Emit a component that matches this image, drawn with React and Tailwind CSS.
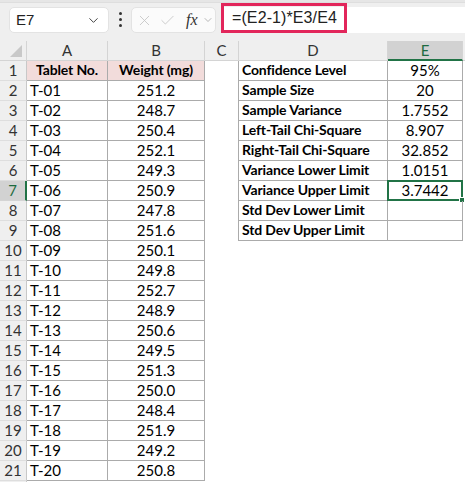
import React from "react";
import { ChevronDown, X, Check } from "lucide-react";

const weights = [
  "251.2", "248.7", "250.4", "252.1", "249.3", "250.9", "247.8", "251.6", "250.1", "249.8",
  "252.7", "248.9", "250.6", "249.5", "251.3", "250.0", "248.4", "251.9", "249.2", "250.8",
];

const stats = [
  ["Confidence Level", "95%"],
  ["Sample Size", "20"],
  ["Sample Variance", "1.7552"],
  ["Left-Tail Chi-Square", "8.907"],
  ["Right-Tail Chi-Square", "32.852"],
  ["Variance Lower Limit", "1.0151"],
  ["Variance Upper Limit", "3.7442"],
  ["Std Dev Lower Limit", ""],
  ["Std Dev Upper Limit", ""],
];

const cell = "h-[20px] flex items-end pb-[1px] leading-[18px] text-black";
const gridLine = "border-[#ababab]";
const bold = "font-bold text-[14px] tracking-[-0.15px]";

const Toolbar = () => (
  <div className="h-[41px] bg-[#efefef] flex flex-col">
    <div className="h-[3px] bg-[#e6e6e6] border-b border-[#dedede]" />
    <div className="flex items-start">
      <div className="ml-[9px] mt-[4px] w-[100px] h-[26px] bg-white rounded-[5px] border border-[#e3e3e3] flex items-center justify-between pl-[6px] pr-[7px]">
        <span className="text-[15px] text-[#222] font-['Liberation_Sans']">E7</span>
        <ChevronDown size={15} strokeWidth={1.6} className="text-[#444]" />
      </div>
      <div className="w-[22px] mt-[9px] flex flex-col items-center gap-[3px]">
        <span className="w-[3px] h-[3px] rounded-full bg-[#333]" />
        <span className="w-[3px] h-[3px] rounded-full bg-[#333]" />
        <span className="w-[3px] h-[3px] rounded-full bg-[#333]" />
      </div>
      <div className="mt-[4px] w-[85px] h-[26px] bg-[#fbfbfb] rounded-[5px] border border-[#e3e3e3] flex items-center pl-[4px]">
        <X size={17} strokeWidth={1.2} className="text-[#c4c4c4]" />
        <Check size={17} strokeWidth={1.2} className="text-[#c4c4c4] ml-[6px]" />
        <span className="ml-[10px] text-[16px] italic font-['Liberation_Serif'] text-[#333]">fx</span>
        <ChevronDown size={12} strokeWidth={1.4} className="text-[#999] ml-[4px]" />
      </div>
      <div className="ml-[5px] mt-[4px] flex-1 h-[26px] bg-white flex">
        <div className="-mt-[4px] w-[126px] h-[30px] border-[3px] border-[#e2265b] flex items-center pl-[8px]">
          <span className="text-[16px] text-[#222] font-['Liberation_Sans'] tracking-[0.1px]">=(E2-1)*E3/E4</span>
        </div>
      </div>
    </div>
  </div>
);

const HeaderRow = () => (
  <div className="h-[20px] flex bg-[#efefef] border-b border-[#d4d4d4] text-[15px] text-[#333]">
    <div className="w-[27px] border-r border-[#d4d4d4] relative">
      <svg className="absolute right-[4px] bottom-[3px]" width="12" height="12" viewBox="0 0 12 12">
        <polygon points="12,0 12,12 0,12" fill="#c8c8c8" />
      </svg>
    </div>
    <div className="w-[81px] border-r border-[#d4d4d4] flex items-center justify-center">A</div>
    <div className="w-[97px] border-r border-[#d4d4d4] flex items-center justify-center">B</div>
    <div className="w-[34px] border-r border-[#d4d4d4] flex items-center justify-center">C</div>
    <div className="w-[149px] border-r border-[#d4d4d4] flex items-center justify-center">D</div>
    <div className="w-[75px] bg-[#d2d2d2] border-r border-[#d4d4d4] border-b-2 border-b-[#217346] -mb-[1px] flex items-center justify-center text-[#1d6b40]">E</div>
    <div className="flex-1" />
  </div>
);

const RowHead = ({ n, active }) => (
  <div
    className={
      active
        ? "w-[27px] h-[20px] bg-[#d2d2d2] border-r-2 border-[#217346] border-b border-b-[#d4d4d4] flex items-center justify-center text-[15px] text-[#1d6b40]"
        : "w-[27px] h-[20px] bg-[#efefef] border-r border-[#c8c8c8] border-b border-b-[#dedede] flex items-center justify-center text-[15px] text-[#333]"
    }
  >
    {n <= 21 ? n : ""}
  </div>
);

const Row = ({ n }) => {
  const isHead = n === 1;
  const stat = n <= 9 ? stats[n - 1] : null;
  return (
    <div className="flex h-[20px]">
      <RowHead n={n} active={n === 7} />
      {n <= 21 ? (
        <>
          <div
            className={`w-[81px] border-r border-b ${gridLine} ${cell} ${
              isHead ? `bg-[#f2dcdb] ${bold} justify-center` : "pl-[3px] text-[15px]"
            }`}
          >
            {isHead ? "Tablet No." : `T-${String(n - 1).padStart(2, "0")}`}
          </div>
          <div
            className={`w-[97px] border-r border-b ${gridLine} ${cell} justify-center ${
              isHead ? `bg-[#f2dcdb] ${bold}` : "text-[15px]"
            }`}
          >
            {isHead ? "Weight (mg)" : weights[n - 2]}
          </div>
        </>
      ) : (
        <div className="w-[178px]" />
      )}
      <div className="w-[33px]" />
      {stat ? (
        <>
          <div className={`w-[150px] border-l border-r border-b ${gridLine} ${cell} pl-[3px] ${bold}`}>
            {stat[0]}
          </div>
          <div className={`w-[75px] border-r border-b ${gridLine} ${cell} text-[15px] justify-center relative`}>
            {stat[1]}
            {n === 7 && (
              <div className="absolute -left-[1px] -top-[1px] w-[76px] h-[21px] border-2 border-[#217346]">
                <span className="absolute -right-[4px] -bottom-[4px] w-[6px] h-[6px] bg-[#217346] border border-white" />
              </div>
            )}
          </div>
        </>
      ) : null}
      <div className="flex-1" />
    </div>
  );
};

export default function App() {
  const rows = Array.from({ length: 22 }, (_, k) => k + 1);
  return (
    <div className="w-[465px] h-[482px] overflow-hidden bg-white font-['Lato',sans-serif]">
      <Toolbar />
      <HeaderRow />
      {rows.map((n) => (
        <Row key={n} n={n} />
      ))}
    </div>
  );
}
